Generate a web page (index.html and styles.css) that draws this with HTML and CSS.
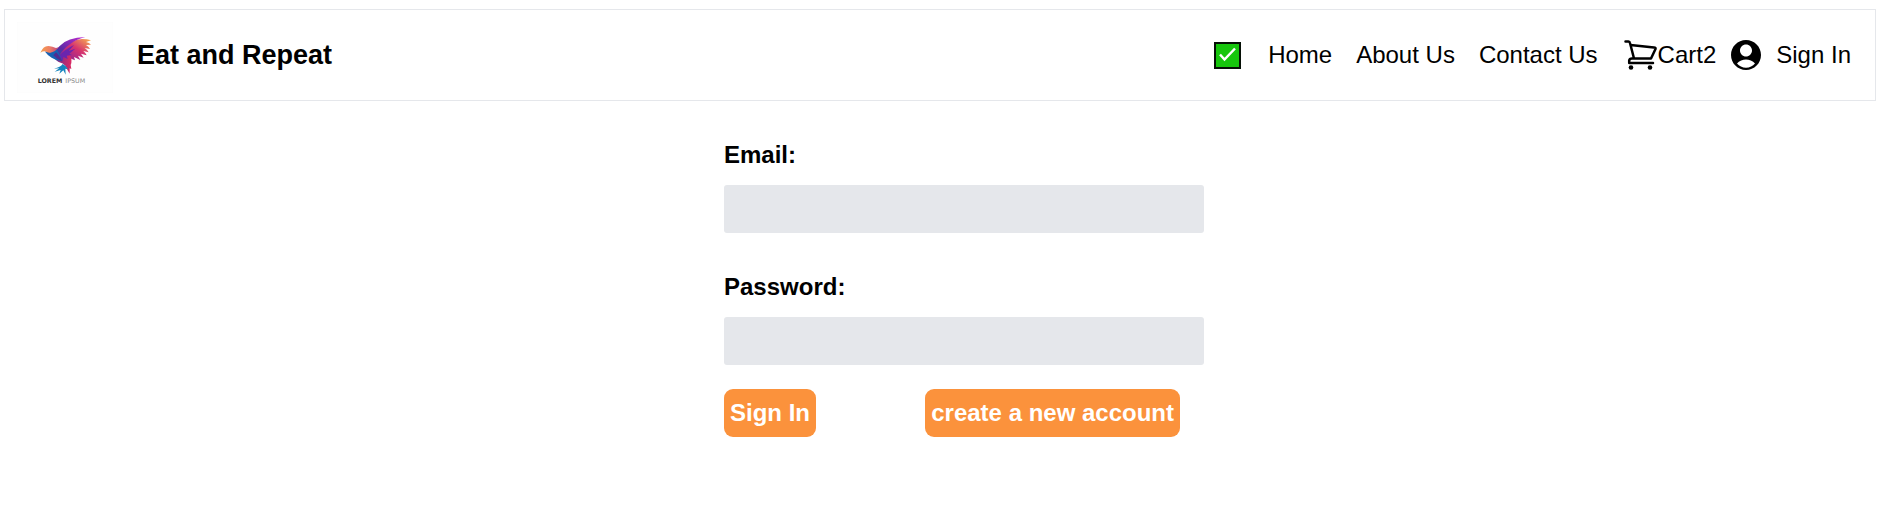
FILE: index.html
```html
<!DOCTYPE html>
<html lang="en">
<head>
<meta charset="utf-8">
<meta name="viewport" content="width=device-width, initial-scale=1">
<title>Eat and Repeat</title>
<link rel="stylesheet" href="styles.css">
</head>
<body>
<header class="header">
  <div class="brand">
    <svg class="logo" viewBox="51 63 288 213" role="img" aria-label="Logo">
      <defs>
        <linearGradient id="head" x1="0" y1="0" x2="1" y2="0">
          <stop offset="0" stop-color="#f5a04c"/><stop offset=".5" stop-color="#ee8064"/><stop offset="1" stop-color="#c2417c"/>
        </linearGradient>
        <linearGradient id="wing" x1="0" y1="1" x2="1" y2="0">
          <stop offset="0" stop-color="#1460a8"/><stop offset=".4" stop-color="#5a2aa5"/><stop offset="1" stop-color="#c02ad0"/>
        </linearGradient>
        <linearGradient id="feather" x1="0" y1="1" x2="1" y2="0">
          <stop offset="0" stop-color="#7a1fa0"/><stop offset=".55" stop-color="#d6336f"/><stop offset="1" stop-color="#f9b44e"/>
        </linearGradient>
        <linearGradient id="body" x1="0" y1="0" x2="1" y2="0">
          <stop offset="0" stop-color="#5b2f96"/><stop offset="1" stop-color="#dc2a62"/>
        </linearGradient>
      </defs>
      <rect class="logo-back" x="51" y="63" width="288" height="213"/>
      <path fill="url(#feather)" d="M178 160C196 134 214 116 246 114Q262 114 273 118Q264 121 258 123Q268 125 273 131L258 132Q266 137 270 144L254 141Q264 148 266 154L250 150Q258 157 260 163L243 158L251 170L234 164L241 177L222 168L225 178L208 171L180 178Z"/>
      <path fill="url(#body)" d="M158 160L210 162Q218 178 212 192L214 204L209 202L209 218L202 206L196 194Q190 186 176 183Q164 178 158 160Z"/>
      <path fill="#6a25ae" d="M174 168Q192 146 222 132L206 150L226 143L208 158L215 162L200 164L203 174L190 168L188 179Z"/>
      <path fill="url(#wing)" d="M146 160Q166 150 180 134Q202 110 256 108Q230 114 212 128Q188 144 178 164Q170 176 160 171Z"/>
      <path fill="#1762b3" d="M134 151Q150 157 170 143L178 160L187 181Q168 179 155 170Q142 163 134 151Z"/>
      <path fill="url(#head)" d="M121 155L127 145Q134 135 146 135Q158 136 168 141L176 139Q166 153 151 155Q142 156 136 151Q129 150 121 155Z"/>
      <path fill="#512c91" d="M168 154Q177 162 187 181Q172 176 160 163Z"/>
      <path fill="#1584bd" d="M188 189Q198 193 204 205L196 203L197 221L190 208L178 218L182 207L164 212L178 202L162 203Q182 198 188 189Z"/>
      <text class="logo-text" x="113" y="245"><tspan class="logo-strong">LOREM</tspan><tspan x="196">IPSUM</tspan></text>
    </svg>
    <h1 class="title">Eat and Repeat</h1>
  </div>
  <nav aria-label="Main">
    <ul class="menu">
      <li class="menu-item">
        <svg class="status" viewBox="0 0 27 27" role="img" aria-label="Online">
          <rect x="1" y="1" width="25" height="25" fill="#16c60c" stroke="#061006" stroke-width="2"/>
          <path d="M6 12.500L10.500 17.500L21 6.500" fill="none" stroke="#fff" stroke-width="2.500"/>
        </svg>
      </li>
      <li class="menu-item"><a class="link" href="#home">Home</a></li>
      <li class="menu-item"><a class="link" href="#about">About Us</a></li>
      <li class="menu-item"><a class="link" href="#contact">Contact Us</a></li>
      <li class="menu-item">
        <a class="link" href="#cart"><svg class="icon" viewBox="0 0 36 36" aria-hidden="true">
          <path d="M3.500 4.500H6.500Q7.700 4.500 8 6L12 21.500M8.500 8L32 10.500Q34 10.700 33.500 12L29 21.500H10Q7.500 21.500 7.200 23.500V26H31" fill="none" stroke="#000" stroke-width="2.500" stroke-linecap="round" stroke-linejoin="round"/>
          <circle cx="9" cy="30.500" r="2.300"/><circle cx="28" cy="30.500" r="2.300"/>
        </svg>Cart2</a>
      </li>
      <li class="menu-item account">
        <svg class="icon" viewBox="0 0 24 24" aria-hidden="true">
          <path d="M12 2C6.480 2 2 6.480 2 12s4.480 10 10 10 10-4.480 10-10S17.520 2 12 2zm0 3c2.220 0 4 1.790 4 4s-1.780 4-4 4-4-1.790-4-4 1.780-4 4-4zm0 15.500c-2.500 0-4.500-1-6-2.800 1.400-1.800 4-2.700 6-2.700s4.600.9 6 2.700c-1.500 1.800-3.500 2.800-6 2.800z"/>
        </svg>
        <a class="link" href="#signin">Sign In</a>
      </li>
    </ul>
  </nav>
</header>
<main class="page">
  <form class="form">
    <div class="field">
      <label class="label" for="email">Email:</label>
      <input class="input" id="email" name="email" type="email">
    </div>
    <div class="field">
      <label class="label" for="password">Password:</label>
      <input class="input" id="password" name="password" type="password">
    </div>
    <div class="actions">
      <button class="button" type="submit">Sign In</button>
      <button class="button" type="button">create a new account</button>
    </div>
  </form>
</main>
</body>
</html>
```
FILE: styles.css
```css
* {
  box-sizing: border-box;
}

body {
  margin: 9px 24px 0 4px;
  background: #fff;
  color: #000;
  font: 24px/36px "Liberation Sans", Arial, sans-serif;
}

.header {
  display: flex;
  align-items: center;
  justify-content: space-between;
  padding: 0 24px 0 12px;
  border: 1px solid #e5e7eb;
}

.brand {
  display: flex;
  align-items: center;
  gap: 24px;
}

.logo {
  display: block;
  width: 96px;
  margin: 12px 0 7px;
}

.logo-back {
  fill: #fefefe;
  stroke: #f8f8f8;
}

.logo-text {
  fill: #888;
  font: 19px "DejaVu Sans", sans-serif;
}

.logo-strong {
  fill: #333;
  font-weight: bold;
}

.title {
  margin: 0;
  font-size: 27px;
}

.menu {
  display: flex;
  align-items: center;
  gap: 24px;
  margin: 0;
  padding: 0;
  list-style: none;
}

.menu-item {
  display: flex;
  align-items: center;
}

.status {
  width: 27px;
  margin-right: 3px;
}

.link {
  display: flex;
  align-items: center;
  color: inherit;
  text-decoration: none;
}

.icon {
  width: 36px;
  height: 36px;
}

.account {
  gap: 12px;
  margin-left: -12px;
}

.page {
  padding: 36px 0 0 48px;
}

.form {
  width: 480px;
  max-width: 100%;
  margin: 0 auto;
}

.field {
  margin-bottom: 36px;
}

.field:nth-child(2) {
  margin-bottom: 24px;
}

.label {
  display: block;
  margin-bottom: 12px;
  font-weight: bold;
}

.input {
  display: block;
  width: 100%;
  height: 48px;
  padding: 6px;
  border: 0;
  border-radius: 3px;
  background: #e5e7eb;
  font: inherit;
}

.actions {
  display: flex;
  justify-content: space-between;
  padding-right: 24px;
}

.button {
  padding: 6px;
  border: 0;
  border-radius: 9px;
  background: #fb923c;
  color: #fff;
  font: inherit;
  font-weight: bold;
}
```
